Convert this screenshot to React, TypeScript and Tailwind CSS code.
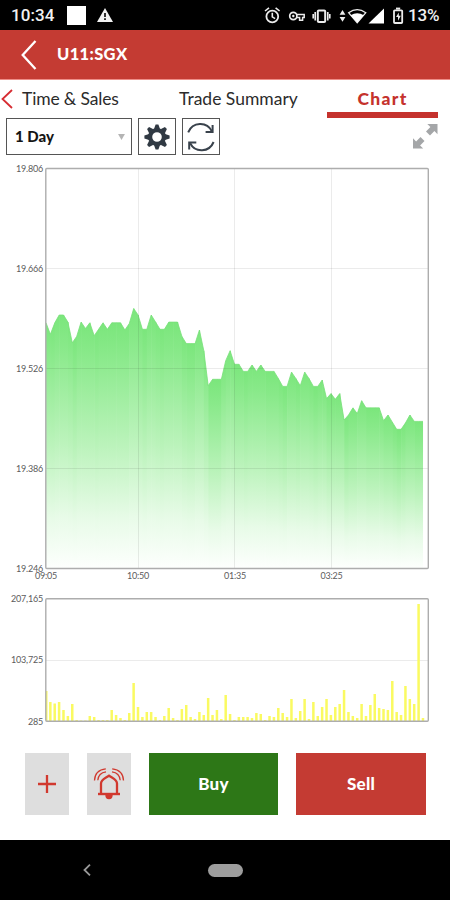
import type { ReactNode } from "react";

const PLOT = { left: 46, right: 428, step: 4.384 };
const BASE = 403;

// last three decimals of each 19.xxx price
const PRICES = [
  590, 574, 590, 601, 601, 591, 562, 571, 591, 582, 590, 572, 581, 590, 581, 590, 590, 590, 580, 589,
  610, 601, 581, 581, 601, 591, 581, 581, 591, 591, 591, 571, 561, 561, 561, 580, 551, 502, 511, 511,
  511, 537, 551, 532, 532, 522, 522, 531, 522, 531, 522, 522, 522, 512, 501, 501, 521, 512, 502, 521,
  512, 501, 501, 510, 484, 491, 483, 491, 454, 461, 471, 463, 481, 471, 471, 471, 471, 453, 461, 451,
  441, 441, 450, 461, 452, 452, 452,
];

const VOLUMES = [
  30, 19, 17.5, 19, 11, 5, 17, 1, 0.5, 0.5, 5, 4, 1, 1, 1, 11, 6, 3, 1, 8,
  38, 14, 4, 9, 9, 4, 1, 5, 13, 3, 1, 12, 16, 4, 2, 9, 6, 23, 6, 11,
  2, 26, 7, 1, 4, 4, 4, 3, 8, 7, 1, 5, 4, 13, 8, 4, 22, 3, 10, 22,
  2, 19, 5, 14, 22, 6, 14, 17, 31, 9, 5, 3, 17, 5, 16, 27, 13, 12, 11, 40,
  9, 6, 35, 22, 17, 117, 3,
];

const xAt = (i: number) => PLOT.left + i * PLOT.step;
const yAt = (p: number) => 3.5 + (806 - p) * 0.7145;

const line = PRICES.map((p, i) => `${xAt(i).toFixed(1)},${yAt(p).toFixed(1)}`).join(" ");

// one slice per interval, each fading from its own top down to the baseline
const slices = PRICES.slice(1).map((p, i) => {
  const x1 = xAt(i);
  const x2 = xAt(i + 1);
  const end = i === PRICES.length - 2 ? x2 : x2 + 0.6;
  return `${x1},${BASE} ${x1},${yAt(PRICES[i])} ${x2},${yAt(p)} ${end},${yAt(p)} ${end},${BASE}`;
});

function Label({ x, y, children, mid }: { x: number; y: number; children: ReactNode; mid?: boolean }) {
  return (
    <text
      x={x}
      y={y}
      textAnchor={mid ? "middle" : "end"}
      className="fill-[#5c5c5c] font-['Lato',sans-serif] text-[9px] tracking-[-0.2px]"
    >
      {children}
    </text>
  );
}

function Charts() {
  return (
    <svg width="450" height="565" viewBox="0 0 450 565" className="block">
      <defs>
        <linearGradient id="fill" x1="0" y1="0" x2="0" y2="1">
          <stop offset="0" stopColor="#7be67c" />
          <stop offset="0.12" stopColor="#88e989" />
          <stop offset="0.5" stopColor="#bbf3bb" />
          <stop offset="0.8" stopColor="#e8fbe8" />
          <stop offset="1" stopColor="#fdfffd" />
        </linearGradient>
      </defs>

      {slices.map((points, i) => (
        <polygon key={i} points={points} fill="url(#fill)" />
      ))}
      <polyline points={line} fill="none" stroke="#78e07a" strokeWidth="0.8" />

      <g stroke="#000" strokeOpacity="0.08">
        {[103.5, 203.5, 303.5, 495.5].map((y) => (
          <path key={y} d={`M46 ${y}H428`} />
        ))}
        {[138.5, 234.5, 331.5].map((x) => (
          <path key={x} d={`M${x} 4V403`} />
        ))}
      </g>

      {VOLUMES.map((v, i) => (
        <rect key={i} x={i === 0 ? 46 : xAt(i) - 1.3} y={556 - v} width={i === 0 ? 1.5 : 2.5} height={v} fill="#fafa61" />
      ))}

      <g fill="none" stroke="#adadad" strokeWidth="1.4">
        <rect x="45.8" y="3.5" width="382.5" height="400" rx="1" />
        <rect x="45.8" y="433.7" width="382.5" height="122.6" rx="1" />
      </g>

      <Label x={43} y={7}>19.806</Label>
      <Label x={43} y={107}>19.666</Label>
      <Label x={43} y={207}>19.526</Label>
      <Label x={43} y={307}>19.386</Label>
      <Label x={43} y={406.5}>19.246</Label>
      <Label x={46} y={414} mid>09:05</Label>
      <Label x={138} y={414} mid>10:50</Label>
      <Label x={235} y={414} mid>01:35</Label>
      <Label x={331.5} y={414} mid>03:25</Label>
      <Label x={43} y={436.5}>207,165</Label>
      <Label x={43} y={498}>103,725</Label>
      <Label x={43} y={559.5}>285</Label>
    </svg>
  );
}

function StatusBar() {
  return (
    <div className="flex h-[30px] items-center bg-black pt-0.5 pl-[11px] font-['Roboto',sans-serif] text-[17px] font-medium text-[#f1f1f1]">
      <span className="w-[56px] tracking-[0.1px]">10:34</span>
      <span className="-mt-0.5 h-[19px] w-[19px] bg-white" />
      <svg width="16" height="14" viewBox="0 0 16 14" className="-mt-0.5 ml-[11px]">
        <path d="M8 0 16 14H0Z" fill="#f1f1f1" />
        <path d="M8 5v4M8 10.2v1.8" stroke="#000" strokeWidth="1.6" />
      </svg>
      <svg width="142" height="20" viewBox="0 0 142 20" fill="none" stroke="#ececec" className="ml-[151px] shrink-0">
        {/* alarm */}
        <circle cx="8.3" cy="10.5" r="5.9" strokeWidth="1.8" />
        <path d="M1 5 5 1.8M15.6 5 11.6 1.8M8.3 6.7v4.2l2.8 1.7" strokeWidth="1.6" />
        {/* key */}
        <circle cx="29.3" cy="10" r="3.6" strokeWidth="1.7" />
        <circle cx="29.3" cy="10" r="1.2" fill="#ececec" stroke="none" />
        <path d="M32.7 8.6H40.2V11.6H38.6V14.2H35.6V11.6H32.7" strokeWidth="1.5" />
        {/* vibrate */}
        <rect x="53.8" y="4.6" width="7.4" height="11.4" rx="1" strokeWidth="2" />
        <path d="M51.2 6v8.6M63.8 6v8.6" strokeWidth="1.6" />
        <path d="M49.2 8v4.4M65.8 8v4.4" strokeWidth="1.6" />
        {/* data arrows, wifi, signal */}
        <path d="M75.6 8.8H81.4L78.5 4ZM75.6 11H81.4L78.5 15.8Z" fill="#ececec" stroke="none" />
        <path d="M84.6 6.7Q93.2.7 101.8 6.7L93.2 16.8Z" strokeWidth="1.3" />
        <path d="M86.6 9.2Q93.2 5.4 99.8 9.2L93.2 16.8Z" fill="#fff" stroke="none" />
        <path d="M104.5 17.5H120V2.5Z" fill="#fff" stroke="none" />
        {/* battery */}
        <rect x="130" y="4.3" width="8.2" height="12.7" rx="0.8" strokeWidth="1.8" />
        <path d="M132 2.6h4.2" strokeWidth="2" />
        <path d="M134.8 6.4 132 11h2v3.7l2.8-4.9h-2Z" fill="#ececec" stroke="none" />
      </svg>
      <span className="ml-[2px] tracking-[-0.2px]">13%</span>
    </div>
  );
}

function Gear() {
  return (
    <svg width="26" height="26" viewBox="-13 -13 26 26">
      <g fill="#303943">
        {[0, 45, 90, 135, 180, 225, 270, 315].map((a) => (
          <path key={a} d="M-3-8 -1.4-12.6H1.4L3-8Z" transform={`rotate(${a})`} />
        ))}
      </g>
      <circle r="6.9" fill="none" stroke="#303943" strokeWidth="4.2" />
    </svg>
  );
}

function Refresh() {
  return (
    <svg width="28" height="30" viewBox="0 0 28 30" fill="none" stroke="#39424c" strokeWidth="2" className="shrink-0">
      <path d="M1.2 10.3C5.5-.4 20-.9 24.8 9.2" />
      <path d="M25.6 3V10H18.6" />
      <path d="M26.6 20C22.3 30.6 8 30.9 3.2 21.2" />
      <path d="M2.2 27.6V20.5H9.3" />
    </svg>
  );
}

function Bell() {
  return (
    <svg width="32" height="34" viewBox="0 0 32 34" fill="none" stroke="#d1392f">
      <path d="M8 27V16.5C8 12.8 11.5 11.8 16 8.7C20.5 11.8 24 12.8 24 16.5V27" strokeWidth="2.3" />
      <path d="M5 27H27" strokeWidth="2.4" />
      <path d="M12.3 28H19.7A3.7 4.2 0 0 1 12.3 28Z" fill="#d1392f" stroke="none" />
      <path d="M1.5 13.5C1.8 6.5 6 2.5 12.8 1.8M4.8 13.2C5.2 8.5 8 5.5 13 4.8M30.5 13.5C30.2 6.5 26 2.5 19.2 1.8M27.2 13.2C26.8 8.5 24 5.5 19 4.8" strokeWidth="1.3" />
    </svg>
  );
}

export default function App() {
  return (
    <div className="flex h-[900px] w-[450px] flex-col overflow-hidden bg-white font-['Lato',sans-serif]">
      <StatusBar />

      <header className="flex h-[50px] items-center border-b border-[#ee8e88] bg-[#c43b33] pl-[21px] text-white">
        <svg width="16" height="30" viewBox="0 0 16 30" fill="none" stroke="#fff" strokeWidth="2.3">
          <path d="M14.5 1 1.7 15 14.5 29" />
        </svg>
        <h1 className="ml-5 text-[16.5px] font-black tracking-[0.35px]">U11:SGX</h1>
      </header>

      <nav className="flex h-[38px] pl-[1px] text-[17.5px] text-[#2b2b2b]">
        <svg width="12" height="20" viewBox="0 0 12 20" fill="none" stroke="#d62c32" strokeWidth="1.8" className="mt-[9px]">
          <path d="M11 1 1.5 10 11 19" />
        </svg>
        <span className="mt-[6px] ml-[9px] w-[157px] whitespace-nowrap tracking-[-0.15px]">Time &amp; Sales</span>
        <span className="mt-[6px] w-[148px] whitespace-nowrap">Trade Summary</span>
        <span className="h-[38px] w-[111px] border-b-6 border-[#c5322d] pt-[6px] text-center font-black tracking-[1.3px] text-[#c5322d]">
          Chart
        </span>
      </nav>

      <div className="flex h-[47px] pl-[6px]">
        <button className="flex h-[37px] w-[126px] items-center justify-between border-[1.5px] border-[#555] pr-[6px] pl-[8px] text-[15px] font-black text-[#151515]">
          1 Day
          <svg width="7" height="6" viewBox="0 0 8 7">
            <path d="M0 0H8L4 7Z" fill="#b4b4b4" />
          </svg>
        </button>
        <button className="ml-[6px] flex h-[37px] w-[38px] items-center justify-center border-[1.5px] border-[#555]">
          <Gear />
        </button>
        <button className="ml-[6px] flex h-[37px] w-[38px] items-center justify-center border-[1.5px] border-[#555]">
          <Refresh />
        </button>
        <svg width="25" height="25" viewBox="0 0 25 25" fill="#a4a6a8" className="mt-[6px] ml-[193px]">
          <path d="M14.3 0H24.5V10.2L21.4 7.1 17 11.5 13 7.5 17.4 3.1Z" />
          <path d="M10.2 24.5H0V14.3L3.1 17.4 7.5 13 11.5 17 7.1 21.4Z" />
        </svg>
      </div>

      <Charts />

      <div className="-mt-px flex h-[111px] gap-[18px] pt-[24px] pl-[25px] text-[17px] font-black tracking-[0.2px] text-white">
        <button className="flex h-[62px] w-[44px] items-center justify-center bg-[#dedede]">
          <svg width="18" height="18" viewBox="0 0 18 18" stroke="#d1392f" strokeWidth="2.3">
            <path d="M9 0V18M0 9H18" />
          </svg>
        </button>
        <button className="flex h-[62px] w-[44px] items-center justify-center bg-[#dedede]">
          <Bell />
        </button>
        <button className="h-[62px] w-[129px] bg-[#2d7717]">Buy</button>
        <button className="h-[62px] w-[130px] bg-[#c43b33]">Sell</button>
      </div>

      <footer className="flex grow items-center bg-black pl-[83px]">
        <svg width="8" height="12" viewBox="0 0 8 12" fill="none" stroke="#999" strokeWidth="1.8">
          <path d="M7 .7 1.5 6 7 11.3" />
        </svg>
        <span className="ml-[117px] h-[13px] w-[35px] rounded-full bg-[#9d9d9d]" />
      </footer>
    </div>
  );
}
